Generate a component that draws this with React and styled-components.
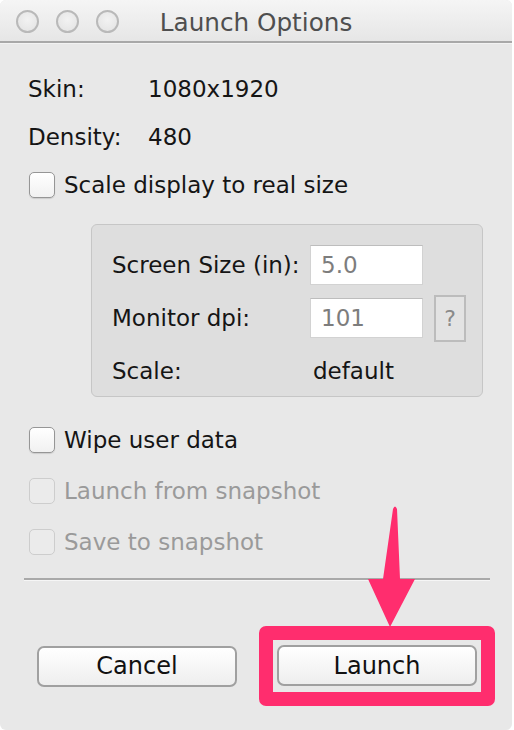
import styled, { createGlobalStyle } from 'styled-components';

const GlobalStyle = createGlobalStyle`
  html, body {
    margin: 0;
    padding: 0;
    background: #ffffff;
  }
  body {
    font-family: 'DejaVu Sans', 'Liberation Sans', sans-serif;
    color: #151515;
  }
`;

const Window = styled.div`
  position: relative;
  width: 512px;
  height: 730px;
  background: #e8e8e8;
  border-radius: 6px;
  overflow: hidden;
  display: flex;
  flex-direction: column;
`;

const TitleBar = styled.div`
  height: 41px;
  flex-shrink: 0;
  display: grid;
  grid-template-columns: 1fr auto 1fr;
  align-items: center;
  background: linear-gradient(#f5f5f5, #e6e6e6);
  border-bottom: 2px solid #a8a8a8;
  box-shadow: 0 1px 0 #f2f2f2;
`;

const Lights = styled.div`
  display: flex;
  gap: 17px;
  padding-left: 16px;
  padding-top: 2px;
`;

const Light = styled.span`
  width: 19px;
  height: 19px;
  border-radius: 50%;
  border: 2px solid #b9b9b9;
  background: radial-gradient(circle at 50% 40%, #f2f2f2, #e2e2e2);
`;

const Title = styled.div`
  font-size: 24.7px;
  color: #4f4f4f;
  padding-top: 4px;
`;

const Body = styled.div`
  padding: 22px 22px 0 24px;
  display: flex;
  flex-direction: column;
`;

const InfoRow = styled.div`
  height: 48px;
  padding-left: 4px;
  display: grid;
  grid-template-columns: 120px auto;
  align-items: center;
  font-size: 23px;
`;

const CheckRow = styled.label`
  height: ${(p) => p.h || 48}px;
  margin-top: ${(p) => p.mt || 0}px;
  padding-left: 5px;
  display: flex;
  align-items: center;
  gap: 9px;
  font-size: 23px;
  color: ${(p) => (p.disabled ? '#9a9a9a' : '#151515')};
`;

const Box = styled.span`
  width: 26px;
  height: 26px;
  border-radius: 5px;
  box-sizing: border-box;
  border: 1px solid ${(p) => (p.disabled ? '#cdcdcd' : '#969696')};
  background: ${(p) =>
    p.disabled ? '#ebebeb' : 'linear-gradient(#ffffff, #f1f1f1)'};
  box-shadow: ${(p) => (p.disabled ? 'none' : '0 1px 1px rgba(0,0,0,0.12)')};
`;

const Group = styled.div`
  margin: 15px 0 0 67px;
  width: 392px;
  height: 173px;
  box-sizing: border-box;
  border: 1px solid #c6c6c6;
  border-radius: 6px;
  background: #dedede;
  padding: 20px 0 0 20px;
  display: flex;
  flex-direction: column;
  gap: 13px;
`;

const FieldRow = styled.div`
  height: 40px;
  display: flex;
  align-items: center;
  font-size: 23px;
`;

const FieldLabel = styled.span`
  width: 198px;
`;

const Value = styled.span`
  padding-left: 3px;
`;

const Input = styled.div`
  width: 113px;
  height: 40px;
  box-sizing: border-box;
  background: #ffffff;
  border: 1px solid #d2d2d2;
  border-top-color: #bdbdbd;
  padding-left: 10px;
  display: flex;
  align-items: center;
  color: #7d7d7d;
`;

const HelpButton = styled.div`
  width: 32px;
  height: 47px;
  margin-left: 11px;
  box-sizing: border-box;
  border: 2px solid #bcbcbc;
  background: #e3e3e3;
  color: #8a8a8a;
  font-size: 22px;
  display: flex;
  align-items: center;
  justify-content: center;
`;

const Separator = styled.div`
  margin-top: 11px;
  height: 2px;
  background: #a9a9a9;
  border-bottom: 1px solid #f6f6f6;
`;

const Footer = styled.div`
  margin-top: 45px;
  display: flex;
  align-items: center;
`;

const Button = styled.div`
  flex-shrink: 0;
  width: 200px;
  height: 41px;
  margin-left: ${(p) => p.ml || 0}px;
  box-sizing: border-box;
  border: 2px solid #a0a0a0;
  border-radius: 7px;
  background: linear-gradient(#ffffff, #eeeeee);
  font-size: 24px;
  color: #111111;
  display: flex;
  align-items: center;
  justify-content: center;
`;

const Highlight = styled.div`
  flex-shrink: 0;
  margin-left: 22px;
  padding: 5px 4px 6px 4px;
  border: 14px solid #ff2d6e;
  border-radius: 7px;
`;

const Arrow = styled.svg`
  position: absolute;
  left: 360px;
  top: 500px;
`;

function App() {
  return (
    <>
      <GlobalStyle />
      <Window>
        <TitleBar>
          <Lights>
            <Light />
            <Light />
            <Light />
          </Lights>
          <Title>Launch Options</Title>
          <div />
        </TitleBar>
        <Body>
          <InfoRow>
            <span>Skin:</span>
            <span>1080x1920</span>
          </InfoRow>
          <InfoRow>
            <span>Density:</span>
            <span>480</span>
          </InfoRow>
          <CheckRow>
            <Box />
            Scale display to real size
          </CheckRow>
          <Group>
            <FieldRow>
              <FieldLabel>Screen Size (in):</FieldLabel>
              <Input>5.0</Input>
            </FieldRow>
            <FieldRow>
              <FieldLabel>Monitor dpi:</FieldLabel>
              <Input>101</Input>
              <HelpButton>?</HelpButton>
            </FieldRow>
            <FieldRow>
              <FieldLabel>Scale:</FieldLabel>
              <Value>default</Value>
            </FieldRow>
          </Group>
          <CheckRow h={51} mt={17}>
            <Box />
            Wipe user data
          </CheckRow>
          <CheckRow h={51} disabled>
            <Box disabled />
            Launch from snapshot
          </CheckRow>
          <CheckRow h={51} disabled>
            <Box disabled />
            Save to snapshot
          </CheckRow>
          <Separator />
          <Footer>
            <Button ml={13}>Cancel</Button>
            <Highlight>
              <Button>Launch</Button>
            </Highlight>
          </Footer>
        </Body>
        <Arrow width="60" height="130" viewBox="360 500 60 130">
          <path
            d="M393 509 Q395 504 397 509 L400 579 L415 579 L390 627 L368 579 L383 579 Z"
            fill="#ff2d6e"
          />
        </Arrow>
      </Window>
    </>
  );
}

export default App;
